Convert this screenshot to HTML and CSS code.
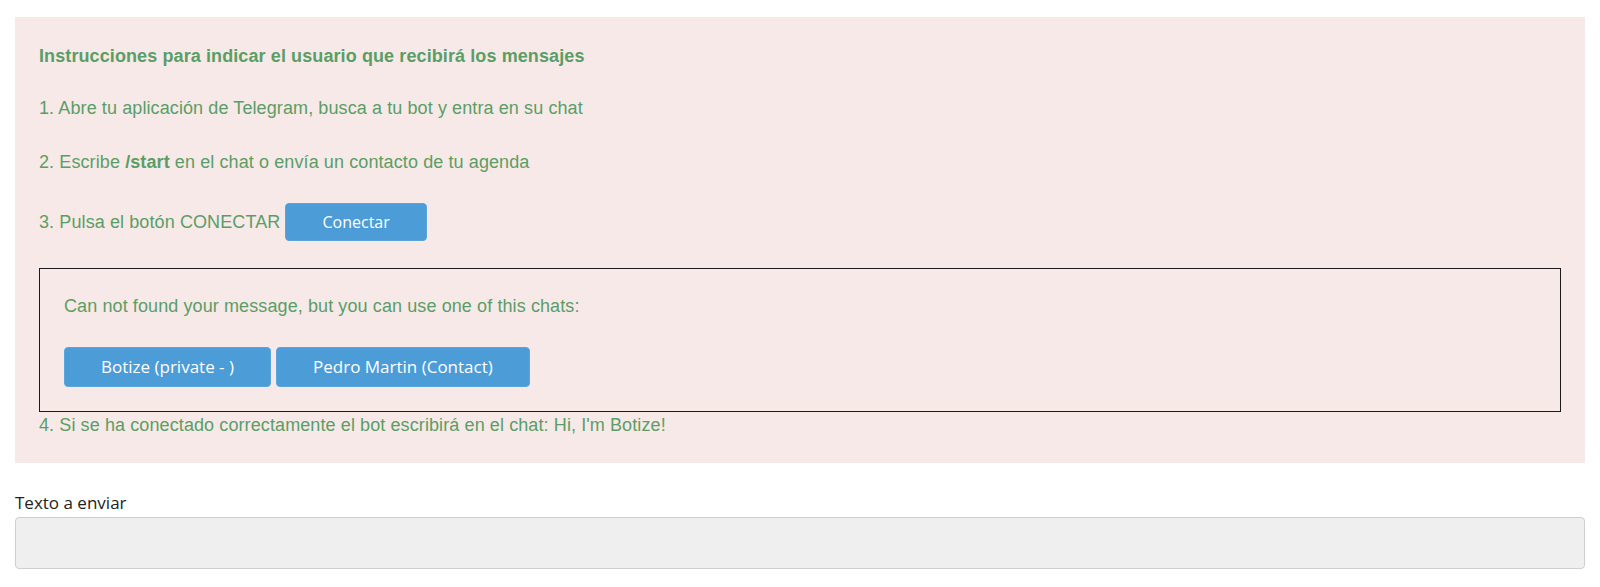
FILE: index.html
```html
<!DOCTYPE html>
<html lang="es">
  <head>
    <meta charset="UTF-8" />
    <meta name="viewport" content="width=device-width, initial-scale=1.0" />
    <title>Conectar Telegram</title>
    <link rel="stylesheet" href="styles.css">
  </head>
  <body>
    <div class="page">
      <div class="instructions">
        <p class="instructions-title">Instrucciones para indicar el usuario que recibirá los mensajes</p>
        <p class="step">1. Abre tu aplicación de Telegram, busca a tu bot y entra en su chat</p>
        <p class="step">2. Escribe <b>/start</b> en el chat o envía un contacto de tu agenda</p>
        <p class="step">3. Pulsa el botón CONECTAR <button type="button" class="btn">Conectar</button></p>

        <div class="chat-box">
          <p class="step">Can not found your message, but you can use one of this chats:</p>
          <div class="chat-list">
            <button type="button" class="btn btn-chat">Botize (private - )</button>
            <button type="button" class="btn btn-chat">Pedro Martin (Contact)</button>
          </div>
        </div>

        <p class="step last">4. Si se ha conectado correctamente el bot escribirá en el chat: Hi, I'm Botize!</p>
      </div>

      <div class="form-group">
        <label for="message">Texto a enviar</label>
        <textarea id="message" name="message"></textarea>
      </div>
    </div>
  </body>
</html>
```

FILE: styles.css
```css
* {
  margin: 0;
  padding: 0;
  box-sizing: border-box;
}

body {
  font-family: "Open Sans", "Noto Sans", sans-serif;
  background-color: #fff;
  color: #222;
}

.page {
  padding: 17px 15px;
}

.instructions {
  background-color: #f7e9e8;
  padding: 26px 24px 24px;
  margin-bottom: 28px;
  font-family: "Liberation Sans", Arial, sans-serif;
  font-size: 18px;
  letter-spacing: 0.1px;
  color: #5a9e66;
}

.instructions p {
  line-height: 27px;
  margin-bottom: 27px;
}

.instructions p.instructions-title {
  font-weight: bold;
  margin-bottom: 25px;
}

.instructions p.last {
  margin-bottom: 0;
}

.btn {
  display: inline-block;
  padding: 8px 36px;
  background-color: #4b9cd7;
  border: 1px solid #5aa5db;
  border-radius: 4px;
  color: #fff;
  font-family: "Open Sans", "Noto Sans", sans-serif;
  font-size: 16px;
  line-height: 20px;
  letter-spacing: 0;
  cursor: pointer;
}

.btn-chat {
  font-size: 17px;
  line-height: 22px;
}

.chat-box {
  border: 1px solid #1c1c1c;
  padding: 24px;
}

.chat-list {
  display: flex;
  gap: 5px;
}

.form-group label {
  display: block;
  font-size: 17px;
  line-height: 23px;
  margin-bottom: 3px;
}

.form-group textarea {
  display: block;
  width: 100%;
  height: 52px;
  background-color: #efefef;
  border: 1px solid #cfcfcf;
  border-radius: 4px;
  resize: none;
}
```
